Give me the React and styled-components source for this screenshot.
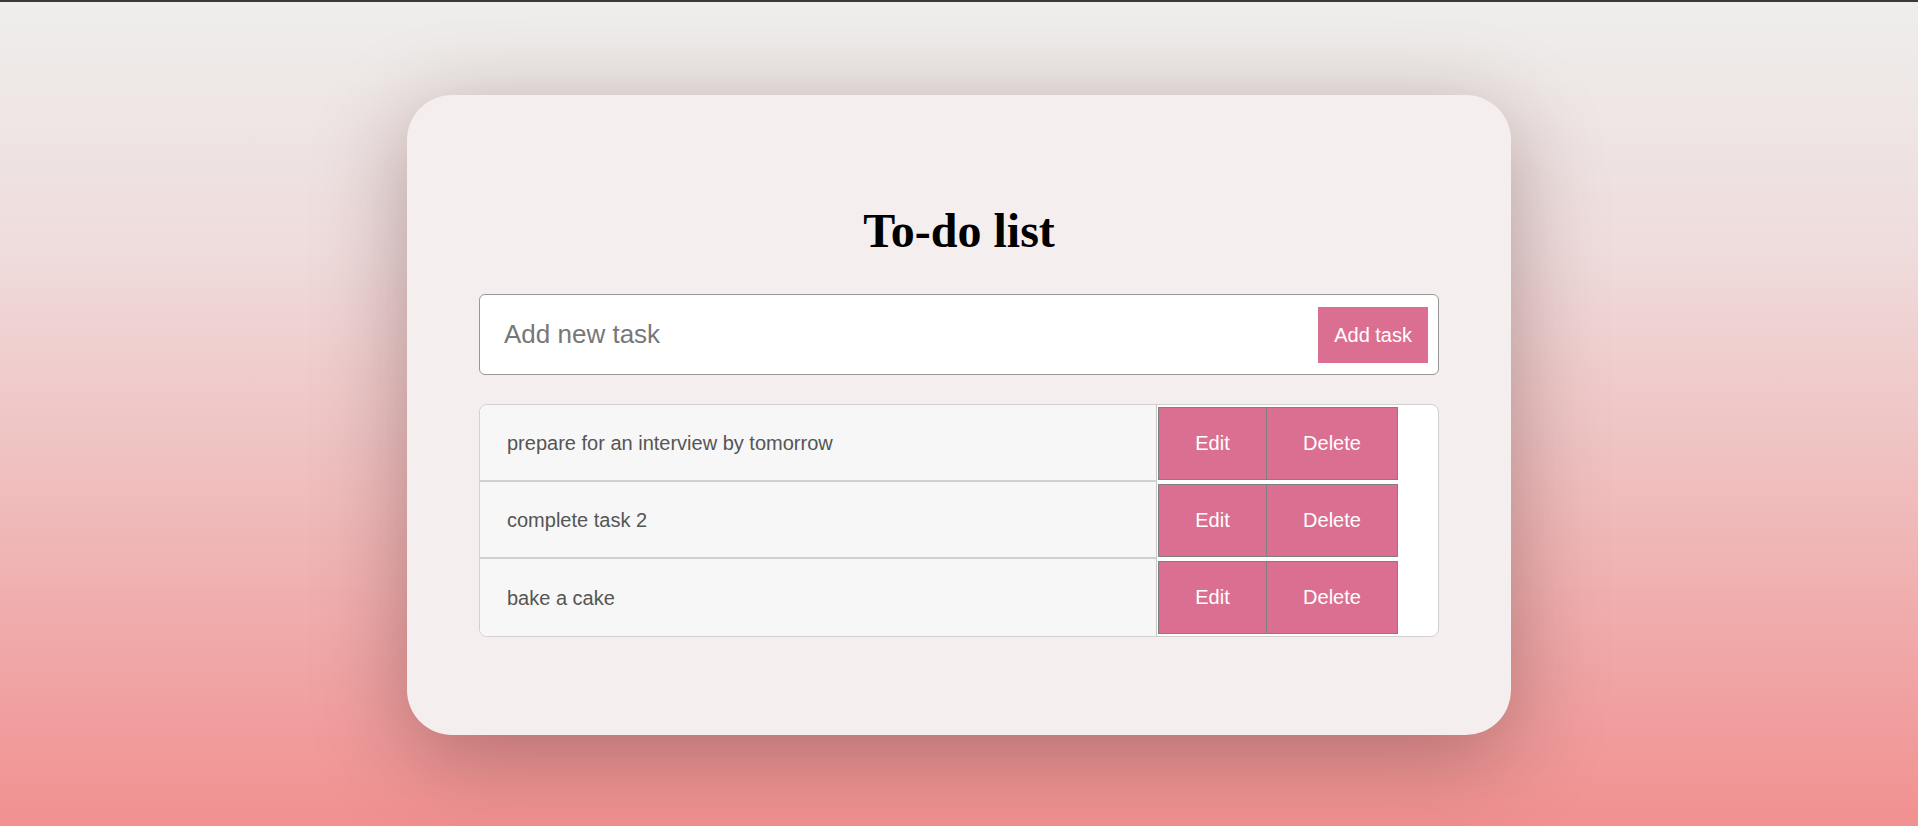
import React, { useState } from "react";
import styled, { createGlobalStyle } from "styled-components";

const GlobalStyle = createGlobalStyle`
  html, body {
    margin: 0;
    padding: 0;
    height: 100%;
  }
  body {
    font-family: "Liberation Sans", Arial, sans-serif;
  }
  * { box-sizing: border-box; }
`;

const Page = styled.div`
  min-height: 826px;
  border-top: 2px solid #3a3a3a;
  background: linear-gradient(180deg, #eeeeec 0%, #efdcdc 30%, #f0bcbc 60%, #f19090 100%);
  display: flex;
  justify-content: center;
  padding-top: 93px;
`;

const Card = styled.div`
  width: 1104px;
  height: 640px;
  background: #f4eeee;
  border-radius: 45px;
  padding: 108px 72px 0;
  box-shadow: 0 22px 90px rgba(60, 20, 20, 0.34);
  align-self: flex-start;
`;

const Title = styled.h1`
  margin: 0;
  font-family: "Liberation Serif", "Times New Roman", serif;
  font-weight: bold;
  font-size: 48px;
  line-height: 56px;
  text-align: center;
  color: #000;
`;

const InputBar = styled.form`
  margin-top: 35px;
  height: 81px;
  background: #fff;
  border: 1px solid #9a9696;
  border-radius: 6px;
  display: flex;
  align-items: center;
  padding: 0 10px 0 24px;
`;

const TaskInput = styled.input`
  flex: 1;
  border: none;
  outline: none;
  background: transparent;
  font-family: "Liberation Sans", Arial, sans-serif;
  font-size: 26px;
  color: #333;
  padding: 0;
  &::placeholder {
    color: #777;
  }
`;

const PinkButton = styled.button`
  background: #db6f91;
  color: #fff;
  font-family: "Liberation Sans", Arial, sans-serif;
  font-size: 20px;
  cursor: pointer;
`;

const AddButton = styled(PinkButton)`
  height: 56px;
  padding: 0 16px;
  border: none;
  margin-top: 1px;
`;

const List = styled.ul`
  list-style: none;
  margin: 29px 0 0;
  padding: 0;
  background: #fff;
  border: 1px solid #d2cfcf;
  border-radius: 8px;
  overflow: hidden;
`;

const Row = styled.li`
  display: flex;
  height: 77px;
  padding-right: 40px;
`;

const TaskText = styled.span`
  flex: 1;
  display: flex;
  align-items: center;
  padding-left: 27px;
  padding-top: 1px;
  background: #f7f7f7;
  border-bottom: ${(p) => (p.$last ? "none" : "2px solid #d0d0d0")};
  border-right: 1px solid #c8c8c8;
  margin-right: 1px;
  font-size: 20px;
  color: #555;
`;

const RowButton = styled(PinkButton)`
  margin: 2px 0;
  height: 73px;
  border: 1px solid #808080;
  width: ${(p) => p.$w}px;
  padding: 0;
  & + & {
    border-left: none;
  }
`;

const initial = [
  "prepare for an interview by tomorrow",
  "complete task 2",
  "bake a cake",
];

export default function App() {
  const [tasks] = useState(initial);
  return (
    <>
      <GlobalStyle />
      <Page>
        <Card>
          <Title>To-do list</Title>
          <InputBar onSubmit={(e) => e.preventDefault()}>
            <TaskInput placeholder="Add new task" />
            <AddButton type="submit">Add task</AddButton>
          </InputBar>
          <List>
            {tasks.map((t, i) => (
              <Row key={t}>
                <TaskText $last={i === tasks.length - 1}>{t}</TaskText>
                <RowButton $w={109}>Edit</RowButton>
                <RowButton $w={131}>Delete</RowButton>
              </Row>
            ))}
          </List>
        </Card>
      </Page>
    </>
  );
}
